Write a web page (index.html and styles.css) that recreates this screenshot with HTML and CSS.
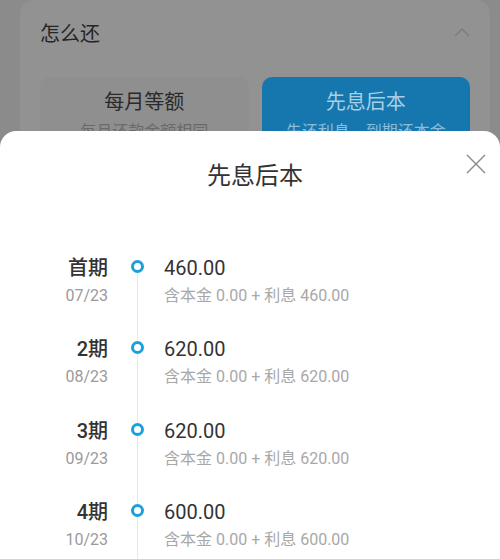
FILE: index.html
```html
<!DOCTYPE html>
<html lang="zh">
<head>
<meta charset="utf-8">
<title>先息后本</title>
<link rel="stylesheet" href="styles.css">
</head>
<body>
<div class="page">
  <div class="card">
    <div class="card-head">
      <span class="card-title">怎么还</span>
      <svg class="chev" width="16" height="10" viewBox="0 0 16 10"><path d="M1 9 L8 2 L15 9" fill="none" stroke="#7d7d7d" stroke-width="1.5"/></svg>
    </div>
    <div class="options">
      <div class="opt">
        <div class="opt-main">每月等额</div>
        <div class="opt-sub">每月还款金额相同</div>
      </div>
      <div class="opt opt-active">
        <div class="opt-main">先息后本</div>
        <div class="opt-sub">先还利息，到期还本金</div>
      </div>
    </div>
  </div>
</div>

<div class="sheet">
  <div class="sheet-head">
    <div class="sheet-title">先息后本</div>
    <svg class="close" width="20" height="20" viewBox="0 0 20 20"><path d="M1 1 L19 19 M19 1 L1 19" fill="none" stroke="#8a8a8a" stroke-width="1.4"/></svg>
  </div>
  <div class="timeline">
    <div class="row first">
      <div class="label"><div class="period">首期</div><div class="date">07/23</div></div>
      <div class="axis"><span class="dot"></span></div>
      <div class="info"><div class="amount">460.00</div><div class="detail">含本金 0.00 + 利息 460.00</div></div>
    </div>
    <div class="row">
      <div class="label"><div class="period">2期</div><div class="date">08/23</div></div>
      <div class="axis"><span class="dot"></span></div>
      <div class="info"><div class="amount">620.00</div><div class="detail">含本金 0.00 + 利息 620.00</div></div>
    </div>
    <div class="row">
      <div class="label"><div class="period">3期</div><div class="date">09/23</div></div>
      <div class="axis"><span class="dot"></span></div>
      <div class="info"><div class="amount">620.00</div><div class="detail">含本金 0.00 + 利息 620.00</div></div>
    </div>
    <div class="row">
      <div class="label"><div class="period">4期</div><div class="date">10/23</div></div>
      <div class="axis"><span class="dot"></span></div>
      <div class="info"><div class="amount">600.00</div><div class="detail">含本金 0.00 + 利息 600.00</div></div>
    </div>
  </div>
</div>
</body>
</html>
```
FILE: styles.css
```css
* { box-sizing: border-box; }
html, body { margin: 0; padding: 0; }
body {
  width: 500px;
  height: 559px;
  overflow: hidden;
  position: relative;
  background: #8b8b8b;
  font-family: "Roboto", "Noto Sans CJK SC", sans-serif;
}
.page { padding: 0 10px 0 20px; }
.card {
  background: #929292;
  border-radius: 14px;
  padding: 0 20px;
  height: 200px;
}
.card-head {
  height: 68px;
  display: flex;
  align-items: center;
  justify-content: space-between;
}
.card-title {
  font-size: 20px;
  color: #252525;
  line-height: 28px;
}
.chev { margin-top: -4px; }
.options {
  margin-top: 9px;
  display: grid;
  grid-template-columns: 1fr 1fr;
  gap: 13px;
}
.opt {
  background: #8f8f8f;
  border-radius: 10px;
  height: 90px;
  padding-top: 11px;
  text-align: center;
}
.opt-active { background: #1577ae; }
.opt-main { font-size: 20px; line-height: 28px; color: #2a2a2a; }
.opt-sub { font-size: 16px; line-height: 22px; margin-top: 5px; color: #6a6a6a; }
.opt-active .opt-main { color: #a8cfe5; }
.opt-active .opt-sub { color: #8bbcd9; }

.sheet {
  position: absolute;
  top: 131px;
  left: 0;
  right: 0;
  bottom: 0;
  background: #fff;
  border-radius: 16px 16px 0 0;
}
.sheet-head {
  position: relative;
  padding-top: 30px;
  height: 124px;
}
.sheet-title {
  text-align: center;
  font-size: 24px;
  line-height: 30px;
  color: #333;
  padding-left: 10px;
}
.close { position: absolute; top: 23px; right: 14px; }
.timeline { padding-left: 40px; }
.row {
  display: grid;
  grid-template-columns: 68px 56px 1fr;
  height: 81.4px;
}
.label { text-align: right; }
.period { font-size: 20px; line-height: 27px; color: #333; font-weight: 500; }
.date { font-size: 16px; line-height: 27px; color: #9a9a9a; }
.axis {
  background: linear-gradient(#e9e9e9, #e9e9e9) no-repeat 29px 0 / 1px 100%;
}
.first .axis { background-position: 29px 12px; }
.dot {
  display: block;
  width: 13px;
  height: 13px;
  margin: 5px 0 0 23px;
  border: 3px solid #1ba0dc;
  border-radius: 50%;
  background: #fff;
}
.amount { font-size: 20px; line-height: 27px; color: #333; }
.detail { font-size: 16px; line-height: 27px; color: #a8a8a8; }
```
